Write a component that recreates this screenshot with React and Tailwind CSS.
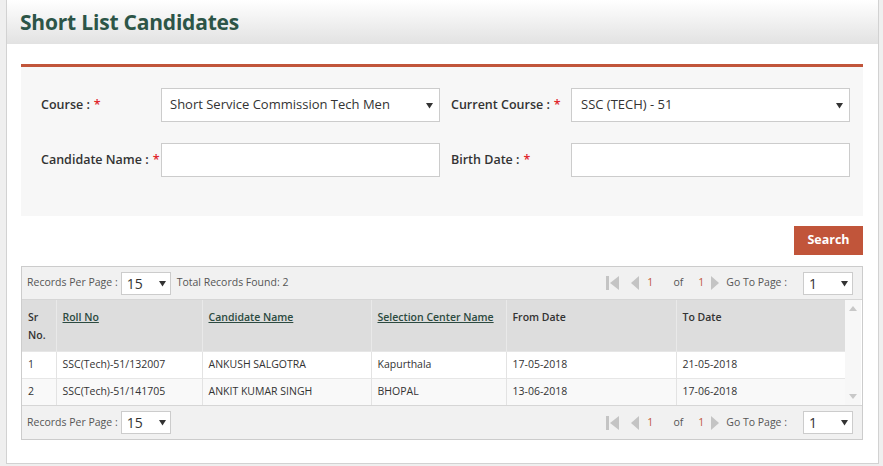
import React from "react";

const Caret = () => (
  <svg width="7" height="7" viewBox="0 0 7 7" className="shrink-0">
    <path d="M0 1h7L3.5 6.5z" fill="#333" />
  </svg>
);

function Select({ value, className }) {
  return (
    <div
      className={
        "flex items-center justify-between border border-[#cccccc] bg-white " +
        className
      }
    >
      <span>{value}</span>
      <Caret />
    </div>
  );
}

function Field({ label, right, children }) {
  return (
    <>
      <div
        className={
          "flex items-center text-[12.5px] font-semibold text-[#333] " +
          (right ? "pl-[11px]" : "")
        }
      >
        {label} :<span className="ml-[4px] text-[#e0262c]">*</span>
      </div>
      {children}
    </>
  );
}

function Pager({ total }) {
  return (
    <div
      className={
        "flex items-center bg-[#f1f1f1] px-[5px] text-[10.5px] text-[#555] " +
        (total ? "h-[32px]" : "h-[33px]")
      }
    >
      <span>Records Per Page :</span>
      <Select
        value="15"
        className="ml-[3px] h-[23px] w-[50px] pl-[5px] pr-[4px] text-[14px] text-[#333]"
      />
      {total && <span className="ml-[6px]">Total Records Found: 2</span>}
      <div className="ml-auto flex items-center">
        <svg width="14" height="16" viewBox="0 0 14 16">
          <rect x="0" y="1" width="3" height="14" fill="#c4c4c4" />
          <path d="M13 1v14L4 8z" fill="#c4c4c4" />
        </svg>
        <svg width="10" height="16" viewBox="0 0 10 16" className="ml-[10px]">
          <path d="M9 1v14L1 8z" fill="#c4c4c4" />
        </svg>
        <span className="ml-[7px] text-[#c1553a]">1</span>
        <span className="ml-[20px]">of</span>
        <span className="ml-[15px] text-[#c1553a]">1</span>
        <svg width="10" height="16" viewBox="0 0 10 16" className="ml-[6px]">
          <path d="M1 1v14L9 8z" fill="#c4c4c4" />
        </svg>
        <span className="ml-[6px]">Go To Page :</span>
        <Select
          value="1"
          className="ml-[16px] mr-[4px] h-[23px] w-[50px] pl-[5px] pr-[4px] text-[14px] text-[#333]"
        />
      </div>
    </div>
  );
}

const rows = [
  ["1", "SSC(Tech)-51/132007", "ANKUSH SALGOTRA", "Kapurthala", "17-05-2018", "21-05-2018"],
  ["2", "SSC(Tech)-51/141705", "ANKIT KUMAR SINGH", "BHOPAL", "13-06-2018", "17-06-2018"],
];

const cols = [
  { w: "w-[34px]", label: "Sr No." },
  { w: "w-[146px]", label: "Roll No", link: true },
  { w: "w-[169px]", label: "Candidate Name", link: true },
  { w: "w-[135px]", label: "Selection Center Name", link: true },
  { w: "w-[170px]", label: "From Date" },
  { w: "w-[169px]", label: "To Date" },
];

export default function App() {
  return (
    <div
      className="h-[466px] w-[883px] overflow-hidden bg-[#efefef] pl-[6px] pr-[4px]"
      style={{ fontFamily: '"Open Sans", "Noto Sans", sans-serif' }}
    >
      <div className="h-[464px] border border-t-0 border-[#d2d2d2] bg-white">
        <div className="flex h-[44px] items-center bg-gradient-to-b from-white to-[#e2e2e2] pl-[13px] pt-[2px]">
          <h1 className="text-[21px] font-bold tracking-[-0.2px] text-[#2c5547]">
            Short List Candidates
          </h1>
        </div>

        <div className="pl-[14px] pr-[15px] pt-[20px]">
          <div className="h-[3px] bg-[#c1553a]" />
          <div className="grid grid-cols-[120px_279px_131px_279px] gap-y-[21px] bg-[#f7f7f7] pb-[39px] pl-[20px] pt-[21px]">
            <Field label="Course">
              <Select
                value="Short Service Commission Tech Men"
                className="h-[34px] pl-[8px] pr-[6px] text-[13px] text-[#333]"
              />
            </Field>
            <Field label="Current Course" right>
              <Select
                value="SSC (TECH) - 51"
                className="h-[34px] pl-[9px] pr-[6px] text-[13px] text-[#333]"
              />
            </Field>
            <Field label="Candidate Name">
              <div className="h-[34px] border border-[#cccccc] bg-white" />
            </Field>
            <Field label="Birth Date" right>
              <div className="h-[34px] border border-[#cccccc] bg-white" />
            </Field>
          </div>

          <div className="flex justify-end pt-[10px]">
            <button className="h-[29px] w-[69px] bg-[#c1553a] text-[12.5px] font-bold text-white">
              Search
            </button>
          </div>

          <div className="mt-[11px] border border-[#cccccc]">
            <Pager total />
            <div className="flex border-t border-[#d6d6d6]">
              <table className="table-fixed border-collapse text-[10.5px] text-[#333]">
                <thead>
                  <tr className="h-[51px] bg-[#dddddd]">
                    {cols.map((c) => (
                      <th
                        key={c.label}
                        className={
                          c.w +
                          " border-l border-[#e9e9e9] px-[6px] pt-[8px] text-left align-top font-semibold leading-[18px] first:border-l-0"
                        }
                      >
                        {c.link ? (
                          <span className="whitespace-nowrap text-[#2c4a40] underline">
                            {c.label}
                          </span>
                        ) : c.label === "Sr No." ? (
                          <>
                            Sr
                            <br />
                            No.
                          </>
                        ) : (
                          c.label
                        )}
                      </th>
                    ))}
                  </tr>
                </thead>
                <tbody>
                  {rows.map((r, i) => (
                    <tr
                      key={i}
                      className={
                        "h-[27px] border-t border-[#e6e6e6] " +
                        (i === 1 ? "bg-[#f9f9f9]" : "bg-white")
                      }
                    >
                      {r.map((v, j) => (
                        <td
                          key={j}
                          className="border-l border-[#e3e3e3] px-[6px] first:border-l-0"
                        >
                          {v}
                        </td>
                      ))}
                    </tr>
                  ))}
                </tbody>
              </table>
              <div className="flex w-[16px] flex-col items-center justify-between bg-[#f7f7f7] py-[6px]">
                <svg width="8" height="5" viewBox="0 0 8 5">
                  <path d="M0 5h8L4 0z" fill="#c8c8c8" />
                </svg>
                <svg width="8" height="5" viewBox="0 0 8 5">
                  <path d="M0 0h8L4 5z" fill="#c8c8c8" />
                </svg>
              </div>
            </div>
            <div className="border-t border-[#d6d6d6]">
              <Pager />
            </div>
          </div>
        </div>
      </div>
    </div>
  );
}
